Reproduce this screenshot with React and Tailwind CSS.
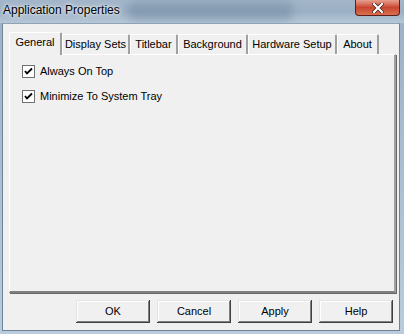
const tabs = [
  { label: "General", w: "w-[53px]", active: true },
  { label: "Display Sets", w: "w-[68px]" },
  { label: "Titlebar", w: "w-[48px]" },
  { label: "Background", w: "w-[70px]" },
  { label: "Hardware Setup", w: "w-[89px]" },
  { label: "About", w: "w-[42px]" },
]

const buttons = ["OK", "Cancel", "Apply", "Help"]

function CheckBox({ label }) {
  return (
    <label className="flex items-center gap-[5px] h-[13px]">
      <span className="w-[13px] h-[13px] bg-white border border-[#707070] flex items-center justify-center">
        <svg width="9" height="9" viewBox="0 0 9 9">
          <path d="M1 4 L3 6.5 L8 1.5" stroke="#000" strokeWidth="1.8" fill="none" />
        </svg>
      </span>
      <span className="text-[11px] text-black leading-none">{label}</span>
    </label>
  )
}

export default function App() {
  return (
    <div
      className="w-[404px] h-[334px] relative overflow-hidden bg-gradient-to-b from-[#9cb1c6] to-[#b9cbdc] flex flex-col"
      style={{ fontFamily: '"Liberation Sans", Arial, sans-serif' }}
    >
      {/* Title bar */}
      <div className="h-[23px] relative overflow-hidden flex items-center px-[3px] bg-gradient-to-b from-[#a3b6c9] via-[#9bb0c5] to-[#b6c7d7]">
        {/* blurred watermark band */}
        <div className="absolute left-[128px] top-[2px] w-[165px] h-[18px] rounded-[6px] bg-[#6f879f] opacity-50 blur-[4px]" />
        <span className="relative text-[12px] text-black [text-shadow:0_0_6px_#fff,0_0_3px_#fff] -mt-[3px]">
          Application Properties
        </span>
        {/* Close button */}
        <div className="absolute right-[4px] top-0 w-[45px] h-[16px] rounded-b-[4px] border border-t-0 border-[#5a1f18] bg-gradient-to-b from-[#e6a08f] via-[#c9452f] to-[#d96f4f] flex items-center justify-center">
          <svg width="12" height="10" viewBox="0 0 12 10">
            <path d="M2 1 L10 9 M10 1 L2 9" stroke="#3b1a14" strokeWidth="3.6" strokeLinecap="square" />
            <path d="M2 1 L10 9 M10 1 L2 9" stroke="#fff" strokeWidth="2.2" strokeLinecap="square" />
          </svg>
        </div>
      </div>

      {/* Client area */}
      <div className="ml-[2px] mr-[4px] mb-[3px] flex-1 bg-[#f0f0f0] border border-[#6f8296] border-t-[#8fa3b8] flex flex-col pl-[6px] pr-[3px] pt-[7px]">
        {/* Tabs */}
        <div className="flex items-end h-[23px] relative z-10">
          {tabs.map((t) =>
            t.active ? (
              <div
                key={t.label}
                className={`${t.w} h-[23px] -mb-px bg-[#f0f0f0] border-l border-t border-white border-r-2 border-r-[#a0a0a0] rounded-t-[2px] flex items-center justify-center text-[11px] text-black pb-[3px]`}
              >
                {t.label}
              </div>
            ) : (
              <div
                key={t.label}
                className={`${t.w} h-[20px] bg-[#f0f0f0] border-l border-t border-white border-r-2 border-r-[#a0a0a0] rounded-t-[2px] flex items-center justify-center text-[11px] text-black`}
              >
                {t.label}
              </div>
            )
          )}
        </div>

        {/* Panel */}
        <div className="w-[387px] h-[239px] border-l border-t border-white border-r-2 border-b-2 border-r-[#a0a0a0] border-b-[#808080] shadow-[1px_1px_0_#696969] flex flex-col gap-[12px] pl-[12px] pt-[10px]">
          <CheckBox label="Always On Top" />
          <CheckBox label="Minimize To System Tray" />
        </div>

        {/* Buttons */}
        <div className="flex justify-end gap-[7px] mt-[7px] pr-[3px]">
          {buttons.map((b) => (
            <button
              key={b}
              className="w-[74px] h-[23px] bg-[#f0f0f0] text-[11px] text-black shadow-[inset_-1px_-1px_#404040,inset_1px_1px_#e3e3e3,inset_-2px_-2px_#808080,inset_2px_2px_#ffffff]"
            >
              {b}
            </button>
          ))}
        </div>
      </div>
    </div>
  )
}
